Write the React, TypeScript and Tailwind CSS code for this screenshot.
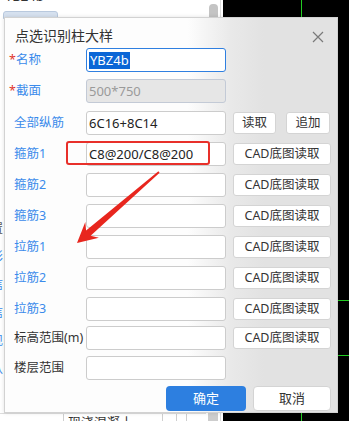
import React from 'react';

const FONT = "font-[family-name:'Noto_Sans','Noto_Sans_CJK_SC',sans-serif]";

function Label({ text, req, dark }: { text: string; req?: boolean; dark?: boolean }) {
  return (
    <div className={`w-[72px] shrink-0 text-[12.5px] leading-[24px] whitespace-nowrap ${dark ? 'text-[#333333]' : 'text-[#3b8beb]'}`}>
      {req && <span className="-ml-[5px] text-[#e0352b]">*</span>}
      {text}
    </div>
  );
}

function CadButton() {
  return (
    <button className="ml-[7px] w-[98px] h-[22px] rounded-[3px] border border-[#d4d4d4] bg-white text-[12.5px] leading-[20px] text-[#333333]">
      CAD底图读取
    </button>
  );
}

function Input({ value, children }: { value?: string; children?: React.ReactNode }) {
  return (
    <div className="w-[140px] h-[24px] shrink-0 rounded-[3px] border border-[#cccccc] bg-white pl-[2px] text-[13px] leading-[22px] text-[#222222] whitespace-nowrap">
      {children ?? value}
    </div>
  );
}

export default function App() {
  return (
    <div className={`relative w-[349px] h-[421px] overflow-hidden flex ${FONT}`}>
      {/* background app: left panel */}
      <div className="w-[223px] h-full bg-white flex pr-[2px]">
        <div className="flex-1 flex flex-col">
          <div className="-mt-[11px] pl-[5px] text-[13px] leading-[14px] text-[#333333]">YBZ4b</div>
          <div className="mt-[8px] ml-[3px] w-[55px] h-[8px] rounded-t-[3px] border border-[#b9c9de] bg-[#d6e1ef]" />
          <div className="mt-[203px] flex flex-col gap-[14px] w-[4px] overflow-hidden text-[12px] leading-[14px] text-[#3b8beb]">
            <span className="-ml-[9px] text-[#555]">置</span>
            <span className="-ml-[9px]">影</span>
            <span className="-ml-[9px]">信</span>
            <span className="-ml-[9px]">信</span>
            <span className="-ml-[9px]">现</span>
            <span className="-ml-[9px]">认</span>
          </div>
          <div className="mt-auto h-[8px] flex border-t border-[#dddddd]">
            <div className="w-[64px] border-r border-[#cfcfcf]" />
            <div className="w-[99px] border-r border-[#cfcfcf] pl-[4px] text-[13px] leading-[16px] text-[#333333] overflow-visible whitespace-nowrap">现浇混凝土</div>
            <div className="w-[14px] border-r border-[#cfcfcf]" />
            <div className="w-[10px] border-r border-[#cfcfcf]" />
          </div>
        </div>
        <div className="w-[15px] flex flex-col items-center justify-between border-r border-[#dcdcdc] pt-[4px]">
          <div className="w-[9px] h-[16px] rounded-t-[4px] bg-[#c4c4c4]" />
          <div className="w-[10px] h-[8px] bg-[#cdcdcd]" />
        </div>
      </div>
      {/* black CAD canvas */}
      <div className="relative flex-1 h-full bg-black">
        <div className="absolute left-[78px] top-0 w-[1px] h-[17px] bg-[#22cc22]" />
        <div className="absolute left-[78px] top-[413px] w-[1px] h-[8px] bg-[#22cc22]" />
        <div className="absolute left-[115px] top-[300px] w-[11px] h-[1px] bg-[#22cc22]" />
        <div className="absolute left-[115px] top-[355px] w-[11px] h-[1px] bg-[#22cc22]" />
      </div>

      {/* dialog window */}
      <div className="absolute left-[4px] top-[17px] w-[334px] h-[396px] border border-[#d2d2d2] shadow-[0_0_4px_rgba(0,0,0,0.12)] bg-[linear-gradient(to_right,#fdfdfd_55%,#e9e9e9_68%,#e2e2e2_78%)] flex flex-col">
        <div className="h-[30px] pt-[8px] pl-[10px] pr-[13px] flex justify-between">
          <span className="text-[14px] leading-[20px] text-[#333333]">点选识别柱大样</span>
          <svg width="12" height="12" viewBox="0 0 12 12" className="mt-[5px]">
            <path d="M1 1 L11 11 M11 1 L1 11" stroke="#7a7a7a" strokeWidth="1.2" fill="none" />
          </svg>
        </div>
        <div className="pl-[9px] flex flex-col">
          <div className="flex items-center h-[24px]">
            <Label text="名称" req />
            <div className="w-[140px] h-[24px] shrink-0 rounded-[3px] border border-[#2f7fe0] bg-white pl-[2px] flex items-center">
              <span className="bg-[#0b66d6] text-white text-[13px] leading-[17px] px-[1px]">YBZ4b</span>
            </div>
          </div>
          <div className="mt-[7px] flex items-center h-[24px]">
            <Label text="截面" req />
            <div className="w-[140px] h-[24px] shrink-0 rounded-[3px] border border-[#c3cad6] bg-[#e6e6e6] pl-[2px] text-[13px] leading-[22px] text-[#9a9a9a]">
              500*750
            </div>
          </div>
          <div className="mt-[8px] flex items-center h-[24px]">
            <Label text="全部纵筋" />
            <Input value="6C16+8C14" />
            <button className="ml-[7px] w-[43px] h-[22px] rounded-[3px] border border-[#d4d4d4] bg-white text-[12.5px] leading-[20px] text-[#333333]">读取</button>
            <button className="ml-[10px] w-[44px] h-[22px] rounded-[3px] border border-[#d4d4d4] bg-white text-[12.5px] leading-[20px] text-[#333333]">追加</button>
          </div>
          <div className="mt-[7px] flex items-center h-[24px]">
            <Label text="箍筋1" />
            <Input value="C8@200/C8@200" />
            <CadButton />
          </div>
          <div className="mt-[7px] flex items-center h-[24px]">
            <Label text="箍筋2" />
            <Input />
            <CadButton />
          </div>
          <div className="mt-[7px] flex items-center h-[24px]">
            <Label text="箍筋3" />
            <Input />
            <CadButton />
          </div>
          <div className="mt-[7px] flex items-center h-[24px]">
            <Label text="拉筋1" />
            <Input />
            <CadButton />
          </div>
          <div className="mt-[7px] flex items-center h-[24px]">
            <Label text="拉筋2" />
            <Input />
            <CadButton />
          </div>
          <div className="mt-[7px] flex items-center h-[24px]">
            <Label text="拉筋3" />
            <Input />
            <CadButton />
          </div>
          <div className="mt-[5px] flex items-center h-[24px]">
            <Label text="标高范围(m)" dark />
            <Input />
            <CadButton />
          </div>
          <div className="mt-[6px] flex items-center h-[24px]">
            <Label text="楼层范围" dark />
            <Input />
          </div>
        </div>
        <div className="mt-[6px] flex justify-end gap-[7px] pr-[6px]">
          <button className="w-[80px] h-[25px] rounded-[4px] bg-[#2d7fe0] text-white text-[13px] leading-[25px]">确定</button>
          <button className="w-[78px] h-[25px] rounded-[4px] border border-[#d4d4d4] bg-white text-[#333333] text-[13px] leading-[23px]">取消</button>
        </div>
      </div>

      {/* annotation: red box */}
      <div className="absolute left-[66px] top-[141px] w-[144px] h-[24px] rounded-[3px] border-2 border-[#e8302a]" />
      {/* annotation: red arrow */}
      <svg className="absolute left-0 top-0 pointer-events-none" width="349" height="421" viewBox="0 0 349 421">
        <polygon
          points="77,243 98.9,237.8 90.6,235.8 159.6,172.7 158.4,171.3 86.1,230.5 85.3,222.1"
          fill="#e8261e"
        />
      </svg>
    </div>
  );
}
